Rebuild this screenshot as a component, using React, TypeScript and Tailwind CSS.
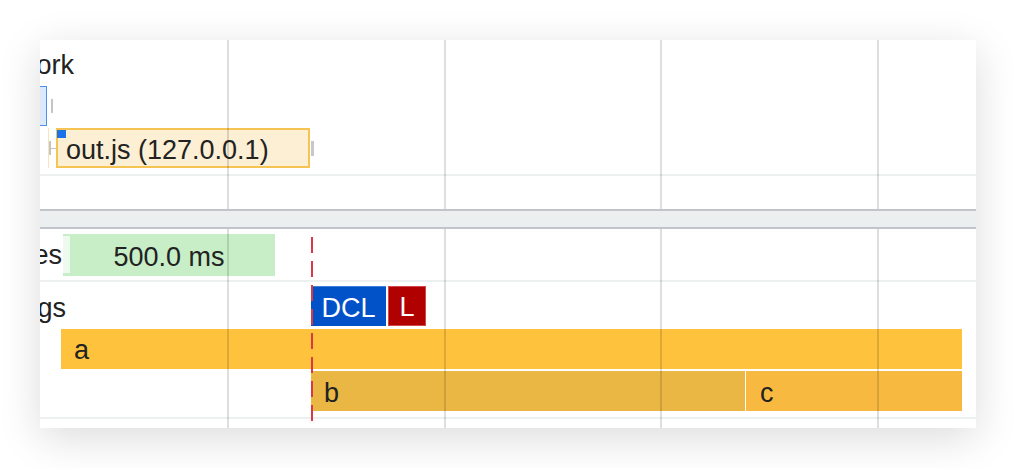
import React from "react";

// vertical time grid, card-relative x positions
const GRID = [187, 404, 620, 837];

function GridLines() {
  return (
    <div className="pointer-events-none absolute inset-0 z-20">
      {GRID.map((x) => (
        <div key={x} className="absolute top-0 bottom-0 w-[2px] bg-black/[0.13]" style={{ left: x }} />
      ))}
    </div>
  );
}

function Divider() {
  return <div className="h-[2px] bg-[#edf0f0]" />;
}

export default function App() {
  return (
    <div className="min-h-[468px] bg-white p-10 font-['Liberation_Sans',Arial,sans-serif] text-[27px] text-[#222]">
      <div className="relative flex h-[388px] w-[936px] flex-col overflow-hidden bg-white shadow-[0_10px_40px_rgba(0,0,0,0.14)]">
        {/* Network track */}
        <section className="relative flex h-[169px] flex-col">
          <div className="h-[46px] pt-[10px] leading-[30px]">
            <span className="ml-[-65px] whitespace-nowrap">Network</span>
          </div>

          <div className="flex h-[40px] items-center gap-[2px]">
            <div className="-ml-10 h-[40px] w-[47px] border border-[#4d90e8] bg-[#dce9fa]" />
            <div className="ml-[2px] h-[14px] w-[2px] bg-[#c4c4c4]" />
          </div>

          <div className="mt-[2px] flex h-[40px] items-center">
            <div className="ml-[8px] h-[40px] w-px bg-[#fbe4b4]" />
            <div className="h-[14px] w-[2px] bg-[#c4c4c4]" />
            <div className="h-px w-[5px] bg-[#c4c4c4]" />
            <div className="relative flex h-[40px] w-[254px] items-end border-2 border-[#f6c453] bg-[#fcefd3] pl-[8px] leading-[32px] whitespace-nowrap">
              <div className="absolute left-[-1px] top-0 h-[8px] w-[9px] bg-[#1a73e8]" />
              out.js (127.0.0.1)
            </div>
            <div className="ml-px h-[15px] w-[3px] bg-[#c8c8c8]" />
          </div>

          <div className="h-[6px]" />
          <Divider />
          <GridLines />
        </section>

        {/* track separator */}
        <div className="h-[20px] border-y-2 border-[#c1c5cb] bg-[#ebeff0]" />

        {/* Frames + Timings */}
        <section className="relative flex flex-1 flex-col">
          <div className="flex h-[51px] items-center">
            <div className="ml-[-78px] w-[100px] shrink-0 whitespace-nowrap pt-[1px] text-right leading-[30px]">Frames</div>
            <div className="relative ml-px flex h-[42px] w-[212px] items-center justify-center bg-[#c7eec7] pt-[5px] leading-[30px]">
              <div className="absolute left-0 top-[2px] h-[37px] w-[7px] bg-[#eefaee]" />
              500.0 ms
            </div>
          </div>
          <Divider />

          <div className="flex h-[47px] items-start">
            <div className="ml-[-90px] w-[116px] shrink-0 whitespace-nowrap pt-[11px] text-right leading-[30px]">Timings</div>
            <div className="ml-[245px] mt-[4px] flex gap-[2px] text-white">
              <div className="flex h-[40px] w-[75px] items-center justify-center border-t border-[#3d7fd8] bg-[#0152c8] pt-[2px] leading-[30px]">
                DCL
              </div>
              <div className="flex h-[40px] w-[38px] items-center justify-center border border-[#d04848] bg-[#b00000] pt-[2px] leading-[30px]">
                L
              </div>
            </div>
          </div>

          <div className="h-[42px] pl-[21px]">
            <div className="flex h-[40px] w-[901px] items-center bg-[#fec23c] pl-[13px] pt-[2px] leading-[30px]">
              a
            </div>
          </div>

          <div className="flex h-[46px] gap-px pl-[271px]">
            <div className="flex h-[40px] w-[434px] items-center bg-[#eab745] pl-[13px] pt-[3px] leading-[30px]">
              b
            </div>
            <div className="flex h-[40px] w-[216px] items-center bg-[#f8b940] pl-[14px] pt-[3px] leading-[30px]">
              c
            </div>
          </div>
          <Divider />

          <div className="pointer-events-none absolute left-[271px] top-[8px] bottom-0 z-30 w-[2px] bg-[repeating-linear-gradient(to_bottom,#d83a45_0px,#d83a45_16px,transparent_16px,transparent_24px)]" />
          <GridLines />
        </section>
      </div>
    </div>
  );
}
